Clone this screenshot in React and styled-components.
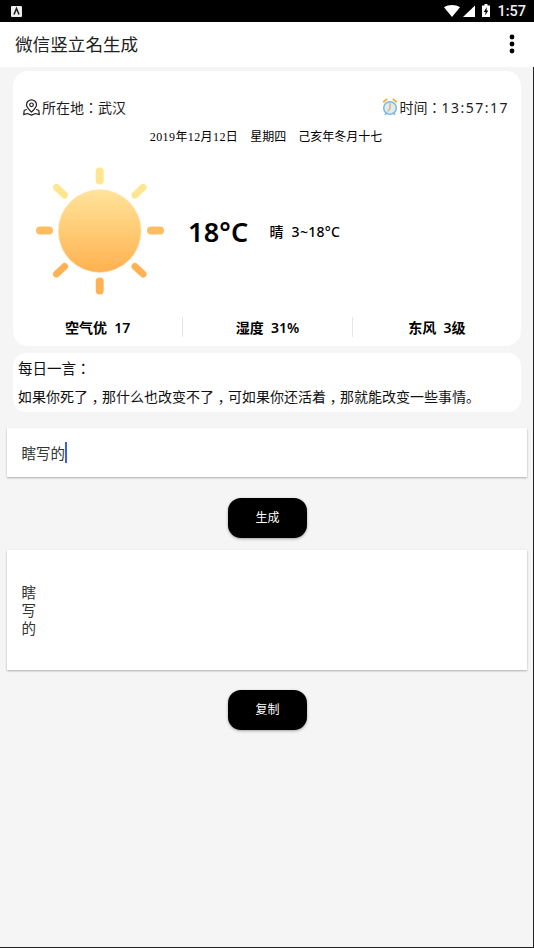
import React from 'react'
import styled, { createGlobalStyle } from 'styled-components'

const CJK = `"Noto Sans", "Noto Sans CJK TC", sans-serif`

const Global = createGlobalStyle`
  html, body { margin: 0; padding: 0; background: #f5f5f5; }
  * { box-sizing: border-box; }
`

const Screen = styled.div`
  width: 534px;
  height: 948px;
  overflow: hidden;
  display: flex;
  flex-direction: column;
  background: #f5f5f5;
  box-shadow: inset -1px -1px 0 #222;
  font-family: ${CJK};
  color: #000;
`

const StatusBar = styled.div`
  height: 22px;
  background: #000;
  display: flex;
  align-items: center;
  justify-content: space-between;
  padding: 0 8px 0 11px;
  color: #fff;
`

const StatusRight = styled.div`
  display: flex;
  align-items: center;
  gap: 6px;
`

const Clock = styled.span`
  font-family: Roboto, sans-serif;
  font-size: 14.5px;
  font-weight: 500;
  color: #f2f2f2;
  margin-left: 1px;
`

const Toolbar = styled.div`
  height: 45px;
  background: #fff;
  display: flex;
  align-items: center;
  justify-content: space-between;
  padding: 0 19px 2px 15px;
`

const Title = styled.div`
  font-size: 17.6px;
  color: #212121;
`

const Content = styled.div`
  display: flex;
  flex-direction: column;
  padding: 4px 7px 0;
`

const WeatherCard = styled.div`
  height: 275px;
  margin: 0 6px;
  background: #fff;
  border-radius: 15px;
  display: flex;
  flex-direction: column;
  padding: 24px 12px 0 10px;
`

const TopRow = styled.div`
  display: flex;
  align-items: center;
  justify-content: space-between;
  height: 24px;
  font-size: 14px;
  color: #1c1c1c;
`

const IconLabel = styled.div`
  display: flex;
  align-items: center;
`

const Digits = styled.span`
  letter-spacing: 1.5px;
`

const DateLine = styled.div`
  margin-top: 9px;
  text-align: center;
  font-family: "Liberation Serif", "Noto Sans CJK SC", serif;
  font-size: 12px;
  line-height: 18px;
  white-space: pre;
`

const DateValue = styled.span`
  letter-spacing: 0.4px;
`

const NowRow = styled.div`
  display: flex;
  align-items: center;
  height: 130px;
  margin-top: 20px;
  padding-left: 13px;
`

const Temp = styled.div`
  margin-left: 24px;
  font-size: 27px;
  font-weight: 600;
  letter-spacing: 0.2px;
`

const Range = styled.div`
  margin-left: 21px;
  font-size: 14px;
  font-weight: 500;
  letter-spacing: 0.3px;
  white-space: pre;
`

const Stats = styled.div`
  margin: 21px -12px 0 -10px;
  display: grid;
  grid-template-columns: repeat(3, 1fr);
`

const Stat = styled.div`
  height: 20px;
  display: flex;
  align-items: center;
  justify-content: center;
  font-size: 14px;
  font-weight: 600;
  white-space: pre;
  & + & { border-left: 1px solid #e6e6e6; }
`

const QuoteCard = styled.div`
  height: 59px;
  margin: 7px 6px 0;
  background: #fff;
  border-radius: 13px;
  padding: 4px 5px 0;
`

const QuoteTitle = styled.div`
  font-size: 14.5px;
  line-height: 22px;
  color: #111;
`

const QuoteText = styled.div`
  margin-top: 7px;
  font-size: 14px;
  line-height: 20px;
  white-space: nowrap;
  color: #111;
`

// the reference font keeps the comma centred but low in its cell
const Comma = styled.span`
  line-height: 0;
  vertical-align: -0.38em;
`

const Period = styled.span`
  font-family: "Noto Sans CJK SC", sans-serif;
`

const Panel = styled.div`
  background: #fff;
  height: ${p => p.$height}px;
  margin-top: ${p => p.$top}px;
  padding-left: 14.5px;
  display: flex;
  align-items: center;
  box-shadow: 0 1px 2px rgba(0, 0, 0, 0.3);
  font-size: 14.5px;
  color: #333;
`

const Caret = styled.span`
  display: inline-block;
  width: 2px;
  height: 21px;
  background: #3f5fe0;
`

const Vertical = styled.div`
  line-height: 18px;
  width: 15px;
  word-break: break-all;
`

const ActionButton = styled.button`
  align-self: center;
  width: 79px;
  height: 40px;
  margin-top: ${p => p.$top}px;
  border: none;
  border-radius: 13px;
  background: #000;
  color: #fff;
  font-family: ${CJK};
  font-size: 12px;
  padding: 0 0 2px 1px;
  box-shadow: 0 1px 3px rgba(0, 0, 0, 0.35);
`

const PinIcon = () => (
  <svg width="19" height="18" viewBox="0 0 19 18" fill="none" stroke="#222" strokeWidth="1.2" strokeLinecap="round" strokeLinejoin="round">
    <path d="M8.5 14C6 11.6 3.5 9.6 3.5 6.8a5 5 0 0 1 10 0c0 2.8-2.5 4.8-5 7.2z" />
    <circle cx="8.5" cy="6.8" r="1.8" />
    <path d="M3.3 11.5 1.2 12.5.7 16.600l3.800-1.100 4 1.600 4-1.600 3.800 1.100-.5-4.100-2.100-1" />
  </svg>
)

const AlarmIcon = () => (
  <svg width="17" height="18" viewBox="0 0 17 18" fill="none">
    <path d="M1.8 3.8 4.5 1.400M14.200 3.800 11.500 1.400" stroke="#f5b33f" strokeWidth="2" strokeLinecap="round" />
    <circle cx="8" cy="10" r="6.3" fill="#dcebf5" stroke="#7db8dc" strokeWidth="1.5" />
    <path d="M8 5.500V10.500L6 13" stroke="#e8a33a" strokeWidth="1.2" strokeLinecap="round" />
    <path d="M3.200 16.500l1.500-1.500M12.800 16.500 11.300 15" stroke="#7db8dc" strokeWidth="1.4" strokeLinecap="round" />
  </svg>
)

const Sun = () => (
  <svg width="128" height="130" viewBox="0 0 128 130">
    <defs>
      <linearGradient id="core" x1="0" y1="0" x2="0" y2="1">
        <stop offset="0" stopColor="#ffe49b" />
        <stop offset="1" stopColor="#ffb14f" />
      </linearGradient>
    </defs>
    <circle cx="63.7" cy="65" r="41.5" fill="url(#core)" stroke="#ffeccb" strokeWidth="0.6" />
    <g strokeWidth="8" strokeLinecap="round">
      <path d="M63.7 5.500V14.500" stroke="#ffe58f" />
      <path d="M63.7 115.500V124.500" stroke="#ffb254" />
      <path d="M20.500 21.500 28.500 29" stroke="#ffe58f" strokeWidth="7" />
      <path d="M107 21.500 99 29" stroke="#ffe58f" strokeWidth="7" />
      <path d="M4 64.500H13" stroke="#ffbd63" />
      <path d="M115 64.500H124" stroke="#ffbd63" />
      <path d="M28.500 100.500 20.500 108" stroke="#ffb254" strokeWidth="7" />
      <path d="M99 100.500 107 108" stroke="#ffb254" strokeWidth="7" />
    </g>
  </svg>
)

const App = () => (
  <Screen>
    <Global />
    <StatusBar>
      <svg width="11" height="11" viewBox="0 0 11 11">
        <rect width="11" height="11" rx="1" fill="#eee" />
        <path d="M3 8.500 5.500 2.500 8 8.500" fill="none" stroke="#222" strokeWidth="1.6" />
      </svg>
      <StatusRight>
        <svg width="32" height="14" viewBox="0 0 32 14" fill="#fff">
          <path d="M0 3.300C4.500 .3 11.500 .3 16 3.300L8 13z" />
          <path d="M19 13 31 1.500V13z" />
        </svg>
        <svg width="8" height="14" viewBox="0 0 8 14">
          <path d="M2.500 0h3v1.500H8V13H0V1.500h2.500z" fill="#fff" />
          <path d="M4.800 3 1.800 8h1.800L3.200 11.500 6.300 6.500H4.500z" fill="#000" />
        </svg>
        <Clock>1:57</Clock>
      </StatusRight>
    </StatusBar>
    <Toolbar>
      <Title>微信竖立名生成</Title>
      <svg width="6" height="20" viewBox="0 0 6 20" fill="#000">
        <circle cx="3" cy="3" r="2.4" />
        <circle cx="3" cy="10" r="2.4" />
        <circle cx="3" cy="17" r="2.4" />
      </svg>
    </Toolbar>
    <Content>
      <WeatherCard>
        <TopRow>
          <IconLabel><PinIcon />所在地：武汉</IconLabel>
          <IconLabel><AlarmIcon />时间：<Digits>13:57:17</Digits></IconLabel>
        </TopRow>
        <DateLine><DateValue>2019年12月12日</DateValue>{'    星期四    己亥年冬月十七'}</DateLine>
        <NowRow>
          <Sun />
          <Temp>18°C</Temp>
          <Range>{'晴  3~18°C'}</Range>
        </NowRow>
        <Stats>
          <Stat>{'空气优  17'}</Stat>
          <Stat>{'湿度  31%'}</Stat>
          <Stat>{'东风  3级'}</Stat>
        </Stats>
      </WeatherCard>
      <QuoteCard>
        <QuoteTitle>每日一言：</QuoteTitle>
        <QuoteText>
          如果你死了<Comma>，</Comma>那什么也改变不了<Comma>，</Comma>可如果你还活着<Comma>，</Comma>那就能改变一些事情<Period>。</Period>
        </QuoteText>
      </QuoteCard>
      <Panel $height={49} $top={16}>瞎写的<Caret /></Panel>
      <ActionButton $top={21}>生成</ActionButton>
      <Panel $height={120} $top={12}>
        <Vertical>瞎写的</Vertical>
      </Panel>
      <ActionButton $top={20}>复制</ActionButton>
    </Content>
  </Screen>
)

export default App
